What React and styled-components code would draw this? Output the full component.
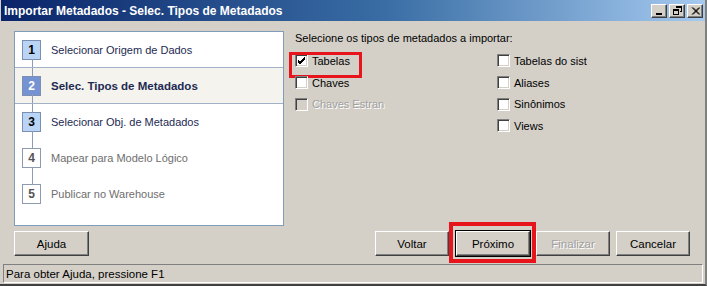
import React from 'react'
import styled, { createGlobalStyle, css } from 'styled-components'

const GlobalStyle = createGlobalStyle`
    html, body {
        margin: 0;
        padding: 0;
        background: #d4d0c8;
    }
    body {
        font-family: "Liberation Sans", Arial, sans-serif;
        font-size: 11px;
    }
`

const Window = styled.div`
    width: 707px;
    height: 286px;
    box-sizing: border-box;
    background: #d4d0c8;
    display: flex;
    flex-direction: column;
    border-right: 2px solid #808080;
    border-bottom: 2px solid #404040;
    overflow: hidden;
`
const TitleBar = styled.div`
    height: 21px;
    margin: 0 0 0 1px;
    display: flex;
    align-items: center;
    padding: 0 2px 0 3px;
    background: linear-gradient(to right, #0a246a 0%, #3a6ea5 55%, #a6caf0 100%);
`
const Title = styled.div`
    flex: 1;
    color: #ffffff;
    font-weight: bold;
    font-size: 12px;
`
const CaptionButtons = styled.div`
    display: flex;
    gap: 2px;
`
const CaptionButton = styled.div`
    width: 16px;
    height: 14px;
    box-sizing: border-box;
    background: #d4d0c8;
    border: 1px solid;
    border-color: #ffffff #404040 #404040 #ffffff;
    box-shadow: inset -1px -1px 0 #808080;
    display: flex;
    align-items: center;
    justify-content: center;
`
const Body = styled.div`
    flex: 1;
    display: flex;
    flex-direction: column;
    padding: 10px 0 0 14px;
`
const Main = styled.div`
    display: flex;
    height: 195px;
`
const StepPanel = styled.div`
    width: 270px;
    box-sizing: border-box;
    background: #ffffff;
    border: 1px solid #7f9db9;
    display: flex;
    flex-direction: column;
`
const StepRow = styled.div`
    position: relative;
    height: 36px;
    box-sizing: border-box;
    display: flex;
    align-items: center;
    padding-left: 7px;
    ${p => p.current && css`
        background: #f4f3ee;
        border-top: 1px solid #a3b1c8;
        border-bottom: 1px solid #a3b1c8;
        margin-top: -1px;
        height: 37px;
    `}
    &::before, &::after {
        content: '';
        position: absolute;
        left: 17px;
        width: 1px;
        background: #8c9cb8;
    }
    &::before {
        top: 0;
        height: 8px;
        display: ${p => (p.first ? 'none' : 'block')};
    }
    &::after {
        bottom: 0;
        height: 9px;
        display: ${p => (p.last ? 'none' : 'block')};
    }
`
const StepNumber = styled.div`
    width: 19px;
    height: 20px;
    box-sizing: border-box;
    border: 1px solid ${p => (p.state === 'todo' ? '#8d9aaf' : '#7b8fb3')};
    background: ${p => (p.state === 'current' ? '#7593d3' : p.state === 'done' ? '#bad4f6' : '#ffffff')};
    color: ${p => (p.state === 'current' ? '#ffffff' : p.state === 'done' ? '#000000' : '#555555')};
    font-weight: bold;
    font-size: 12px;
    display: flex;
    align-items: center;
    justify-content: center;
`
const StepLabel = styled.div`
    margin-left: 10px;
    color: ${p => (p.state === 'todo' ? '#6e6e6e' : '#1e2a52')};
    font-weight: ${p => (p.state === 'current' ? 'bold' : 'normal')};
    font-size: ${p => (p.state === 'current' ? '11.5px' : '11px')};
`
const Options = styled.div`
    margin-left: 11px;
    display: flex;
    flex-direction: column;
`
const Prompt = styled.div`
    height: 14px;
    margin-top: 1px;
    color: #000000;
`
const OptionGrid = styled.div`
    margin-top: 4px;
    display: grid;
    grid-template-columns: 202px 150px;
    grid-auto-flow: column;
    grid-template-rows: repeat(4, 21.7px);
`
const CheckRow = styled.label`
    position: relative;
    display: flex;
    align-items: center;
    color: ${p => (p.disabled ? '#a0a0a0' : '#000000')};
    text-shadow: ${p => (p.disabled ? '1px 1px 0 #ffffff' : 'none')};
    ${p => p.highlight && css`
        &::after {
            content: '';
            position: absolute;
            left: -6px;
            top: 2px;
            width: 73px;
            height: 26px;
            box-sizing: border-box;
            border: 3px solid #e8141c;
        }
    `}
`
const Box = styled.span`
    width: 13px;
    height: 13px;
    box-sizing: border-box;
    background: ${p => (p.disabled ? '#d4d0c8' : '#ffffff')};
    border: 1px solid;
    border-color: #808080 #ffffff #ffffff #808080;
    box-shadow: inset 1px 1px 0 #404040, inset -1px -1px 0 #d4d0c8;
    margin-right: 4px;
    display: flex;
    align-items: center;
    justify-content: center;
`
const ButtonRow = styled.div`
    display: flex;
    align-items: center;
    margin-top: 5px;
    height: 25px;
    padding-right: 15px;
`
const Spacer = styled.div`
    flex: 1;
`
const Button = styled.div`
    position: relative;
    width: ${p => p.w || 74}px;
    height: 25px;
    box-sizing: border-box;
    margin-left: ${p => p.gap || 0}px;
    background: #d4d0c8;
    border: 1px solid;
    border-color: #ffffff #404040 #404040 #ffffff;
    box-shadow: inset -1px -1px 0 #808080;
    display: flex;
    align-items: center;
    justify-content: center;
    color: ${p => (p.disabled ? '#a0a0a0' : '#000000')};
    text-shadow: ${p => (p.disabled ? '1px 1px 0 #ffffff' : 'none')};
    font-size: 11.5px;
    ${p => p.isDefault && css`
        outline: 1px solid #000000;
        &::after {
            content: '';
            position: absolute;
            left: -8px;
            right: -7px;
            top: -10px;
            bottom: -8px;
            border: 4px solid #e8141c;
        }
    `}
`
const StatusBar = styled.div`
    margin: 8px 0 0 -11px;
    width: 700px;
    height: 19px;
    box-sizing: border-box;
    border: 1px solid;
    border-color: #808080 #ffffff #ffffff #808080;
    display: flex;
    align-items: center;
    padding-left: 2px;
    font-size: 11.5px;
    color: #000000;
`

const Check = () => (
    <svg width="9" height="9" viewBox="0 0 9 9">
        <path d="M1 4 L3 6 L8 1 M1 5 L3 7 L8 2 M1 6 L3 8 L8 3" stroke="#000" strokeWidth="1" fill="none" shapeRendering="crispEdges" />
    </svg>
)

const steps = [
    { n: 1, label: 'Selecionar Origem de Dados', state: 'done' },
    { n: 2, label: 'Selec. Tipos de Metadados', state: 'current' },
    { n: 3, label: 'Selecionar Obj. de Metadados', state: 'done' },
    { n: 4, label: 'Mapear para Modelo Lógico', state: 'todo' },
    { n: 5, label: 'Publicar no Warehouse', state: 'todo' },
]

const options = [
    { label: 'Tabelas', checked: true, highlight: true },
    { label: 'Chaves' },
    { label: 'Chaves Estran', disabled: true },
    null,
    { label: 'Tabelas do sist' },
    { label: 'Aliases' },
    { label: 'Sinônimos' },
    { label: 'Views' },
]

const App = () => {
    return <Window>
        <GlobalStyle />
        <TitleBar>
            <Title>Importar Metadados - Selec. Tipos de Metadados</Title>
            <CaptionButtons>
                <CaptionButton>
                    <svg width="8" height="8" viewBox="0 0 8 8"><rect x="1" y="6" width="6" height="2" fill="#000" /></svg>
                </CaptionButton>
                <CaptionButton>
                    <svg width="9" height="9" viewBox="0 0 9 9" shapeRendering="crispEdges">
                        <path d="M3 0.5 H8.5 V5.5 H7 M3 0.5 V2 M3 1.5 H8.5" stroke="#000" fill="none" />
                        <path d="M0.5 3.5 H5.5 V8.5 H0.5 Z M0.5 4.5 H5.5" stroke="#000" fill="none" />
                    </svg>
                </CaptionButton>
                <CaptionButton>
                    <svg width="9" height="8" viewBox="0 0 9 8">
                        <path d="M1 0.5 L8 7.5 M8 0.5 L1 7.5 M2 0.5 L9 7.5 M9 0.5 L2 7.5" stroke="#000" strokeWidth="1" />
                    </svg>
                </CaptionButton>
            </CaptionButtons>
        </TitleBar>
        <Body>
            <Main>
                <StepPanel>
                    {steps.map((s, i) => (
                        <StepRow key={s.n} current={s.state === 'current'} first={i === 0} last={i === steps.length - 1}>
                            <StepNumber state={s.state}>{s.n}</StepNumber>
                            <StepLabel state={s.state}>{s.label}</StepLabel>
                        </StepRow>
                    ))}
                </StepPanel>
                <Options>
                    <Prompt>Selecione os tipos de metadados a importar:</Prompt>
                    <OptionGrid>
                        {options.map((o, i) => o ? (
                            <CheckRow key={i} disabled={o.disabled} highlight={o.highlight}>
                                <Box disabled={o.disabled}>{o.checked && <Check />}</Box>
                                {o.label}
                            </CheckRow>
                        ) : <div key={i} />)}
                    </OptionGrid>
                </Options>
            </Main>
            <ButtonRow>
                <Button w={75}>Ajuda</Button>
                <Spacer />
                <Button>Voltar</Button>
                <Button gap={7} isDefault>Próximo</Button>
                <Button gap={6} disabled>Finalizar</Button>
                <Button gap={6}>Cancelar</Button>
            </ButtonRow>
            <StatusBar>Para obter Ajuda, pressione F1</StatusBar>
        </Body>
    </Window>
}

export default App
